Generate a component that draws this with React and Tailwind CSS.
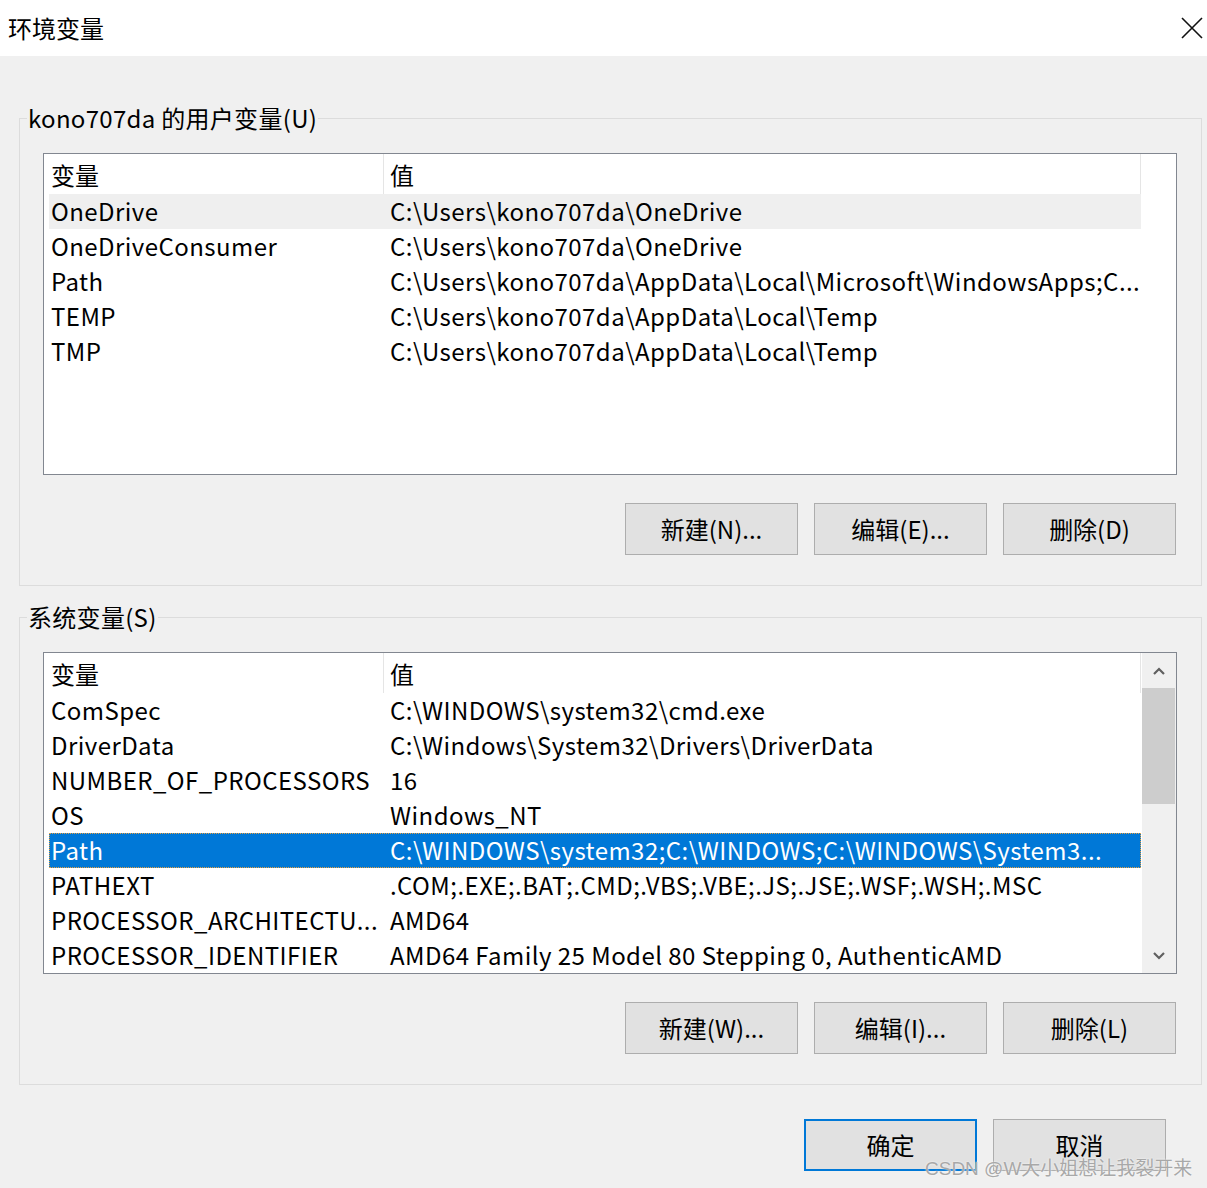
import React from "react";

const userRows = [
  ["OneDrive", "C:\\Users\\kono707da\\OneDrive"],
  ["OneDriveConsumer", "C:\\Users\\kono707da\\OneDrive"],
  ["Path", "C:\\Users\\kono707da\\AppData\\Local\\Microsoft\\WindowsApps;C..."],
  ["TEMP", "C:\\Users\\kono707da\\AppData\\Local\\Temp"],
  ["TMP", "C:\\Users\\kono707da\\AppData\\Local\\Temp"],
];

const sysRows = [
  ["ComSpec", "C:\\WINDOWS\\system32\\cmd.exe"],
  ["DriverData", "C:\\Windows\\System32\\Drivers\\DriverData"],
  ["NUMBER_OF_PROCESSORS", "16"],
  ["OS", "Windows_NT"],
  ["Path", "C:\\WINDOWS\\system32;C:\\WINDOWS;C:\\WINDOWS\\System3..."],
  ["PATHEXT", ".COM;.EXE;.BAT;.CMD;.VBS;.VBE;.JS;.JSE;.WSF;.WSH;.MSC"],
  ["PROCESSOR_ARCHITECTU...", "AMD64"],
  ["PROCESSOR_IDENTIFIER", "AMD64 Family 25 Model 80 Stepping 0, AuthenticAMD"],
];

function Row({ name, value, hover, selected }) {
  let cls = "flex h-[35px] items-center ml-[5px] w-[1092px] shrink-0 whitespace-nowrap tracking-[0.45px] pb-[1px] ";
  if (selected) cls += "bg-[#0078d7] text-white outline-1 outline-dotted outline-[#e8a040] -outline-offset-1";
  else if (hover) cls += "bg-[#efefef]";
  return (
    <div className={cls}>
      <span className="w-[341px] pl-[2px] shrink-0">{name}</span>
      <span className="flex-1">{value}</span>
    </div>
  );
}

function Header() {
  return (
    <div className="flex h-[40px] shrink-0 w-[1097px] items-center">
      <div className="w-[340px] h-full pl-[7px] pt-[2px] flex items-center border-r border-[#e5e5e5] shrink-0">变量</div>
      <div className="flex-1 h-full pl-[6px] pt-[2px] flex items-center border-r border-[#e5e5e5]">值</div>
    </div>
  );
}

function ListBox({ rows, hover, selected, scrollbar }) {
  return (
    <div className="w-[1134px] h-[322px] border border-[#828790] bg-white flex overflow-hidden">
      <div className="w-[1098px] flex flex-col overflow-hidden">
        <Header />
        {rows.map((r, i) => (
          <Row key={i} name={r[0]} value={r[1]} hover={i === hover} selected={i === selected} />
        ))}
      </div>
      {scrollbar && (
        <div className="w-[34px] h-full bg-[#f0f0f0] flex flex-col">
          <div className="h-[35px] flex items-center justify-center">
            <svg width="12" height="8" viewBox="0 0 12 8">
              <path d="M1 7 L6 2 L11 7" fill="none" stroke="#606060" strokeWidth="2.2" />
            </svg>
          </div>
          <div className="h-[116px] w-[33px] bg-[#cdcdcd]" />
          <div className="flex-1" />
          <div className="h-[35px] flex items-center justify-center">
            <svg width="12" height="8" viewBox="0 0 12 8">
              <path d="M1 1 L6 6 L11 1" fill="none" stroke="#606060" strokeWidth="2.2" />
            </svg>
          </div>
        </div>
      )}
    </div>
  );
}

function Btn({ children, primary }) {
  return (
    <div
      className={
        "w-[173px] h-[52px] flex items-center justify-center bg-[#e1e1e1] " +
        (primary ? "border-2 border-[#0078d7]" : "border border-[#adadad]")
      }
    >
      {children}
    </div>
  );
}

function Group({ title, rows, hover, selected, scrollbar, buttons, className }) {
  return (
    <fieldset className={"w-[1183px] border border-[#dcdcdc] pl-[23px] pr-[24px] pb-[30px] " + className}>
      <legend className="-ml-[16px] px-[1px] h-[32px] leading-[32px] tracking-[0.3px]">{title}</legend>
      <div className="mt-[19px]">
        <ListBox rows={rows} hover={hover} selected={selected} scrollbar={scrollbar} />
      </div>
      <div className="flex justify-end gap-[16px] mt-[28px] pr-[1px]">
        {buttons.map((b) => (
          <Btn key={b}>{b}</Btn>
        ))}
      </div>
    </fieldset>
  );
}

export default function App() {
  return (
    <div className="w-[1207px] h-[1188px] bg-[#f0f0f0] relative overflow-hidden text-[24px] text-black font-['Noto_Sans_CJK_SC','Noto_Sans',sans-serif]">
      <div className="h-[56px] bg-white flex items-center justify-between pl-[8px] pr-[4px]">
        <span className="leading-none">环境变量</span>
        <svg width="22" height="22" viewBox="0 0 22 22">
          <path d="M1 1 L21 21 M21 1 L1 21" stroke="#111" strokeWidth="1.6" />
        </svg>
      </div>
      <div className="pl-[19px]">
        <Group
          className="mt-[46px]"
          title="kono707da 的用户变量(U)"
          rows={userRows}
          hover={0}
          buttons={["新建(N)...", "编辑(E)...", "删除(D)"]}
        />
        <Group
          className="mt-[15px]"
          title="系统变量(S)"
          rows={sysRows}
          selected={4}
          scrollbar
          buttons={["新建(W)...", "编辑(I)...", "删除(L)"]}
        />
      </div>
      <div className="flex justify-end gap-[16px] pr-[41px] mt-[34px]">
        <Btn primary>确定</Btn>
        <Btn>取消</Btn>
      </div>
      <div className="absolute left-[925px] top-[1158px] text-[19px] leading-[22px] text-[#a8a8a8] [text-shadow:0_0_2px_#ffffff] whitespace-nowrap font-['Liberation_Sans','Noto_Sans_CJK_SC',sans-serif]">
        CSDN @W大小姐想让我裂开来
      </div>
    </div>
  );
}
